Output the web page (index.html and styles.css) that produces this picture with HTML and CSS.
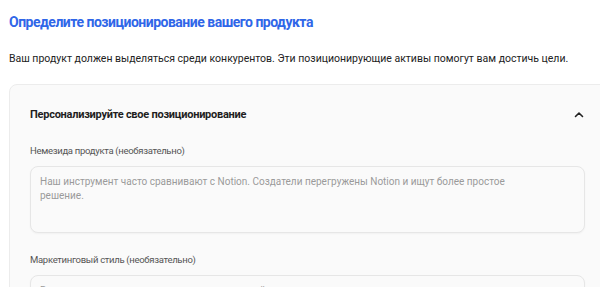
FILE: index.html
```html
<!DOCTYPE html>
<html lang="ru">
<head>
<meta charset="utf-8">
<link rel="stylesheet" href="styles.css">
</head>
<body>
<main class="page">
  <h1 class="title">Определите позиционирование вашего продукта</h1>
  <p class="intro">Ваш продукт должен выделяться среди конкурентов. Эти позиционирующие активы помогут вам достичь цели.</p>
  <section class="card">
    <div class="card-head">
      <h2 class="card-title">Персонализируйте свое позиционирование</h2>
      <svg class="chev" width="12" height="12" viewBox="0 0 12 12"><path d="M2.5 7.5 L6 4 L9.5 7.5" fill="none" stroke="#222" stroke-width="1.6" stroke-linecap="round" stroke-linejoin="round"/></svg>
    </div>
    <div class="field">
      <label class="label">Немезида продукта (необязательно)</label>
      <div class="textarea placeholder">Наш инструмент часто сравнивают с Notion. Создатели перегружены Notion и ищут более простое решение.</div>
    </div>
    <div class="field field-next">
      <label class="label">Маркетинговый стиль (необязательно)</label>
      <div class="textarea placeholder">Вдохновляет восстановить контроль над своей продуктивностью.</div>
    </div>
  </section>
</main>
</body>
</html>
```

FILE: styles.css
```css
html, body {
  margin: 0;
  padding: 0;
  background: #ffffff;
  overflow: hidden;
}
body {
  font-family: Roboto, "Noto Sans", sans-serif;
  color: #222;
}
.page {
  padding: 13px 0 0 9px;
}
.title {
  margin: 0;
  font-size: 14px;
  font-weight: 700;
  letter-spacing: -0.5px;
  color: #2f66e8;
  line-height: 18px;
}
.intro {
  margin: 21px 0 0;
  font-size: 10.5px;
  line-height: 14px;
  color: #222;
}
.card {
  margin-top: 18px;
  width: 600px;
  box-sizing: border-box;
  background: #fafafa;
  border: 1px solid #ececec;
  border-radius: 8px;
  padding: 22px 24px 20px 20px;
}
.card-head {
  display: flex;
  align-items: center;
  justify-content: space-between;
  width: 555px;
}
.card-title {
  margin: 0;
  font-size: 11px;
  font-weight: 700;
  letter-spacing: -0.25px;
  line-height: 16px;
  color: #1e1e1e;
}
.chev {
  display: block;
}
.field {
  margin-top: 21px;
  width: 555px;
}
.field-next {
  margin-top: 20px;
}
.label {
  display: block;
  font-size: 9.5px;
  letter-spacing: -0.3px;
  line-height: 14px;
  color: #555;
}
.textarea {
  margin-top: 8px;
  box-sizing: border-box;
  height: 67px;
  padding: 8px 50px 8px 9px;
  background: #fafafa;
  border: 1px solid #e6e6e6;
  border-radius: 8px;
  box-shadow: 0 1px 2px rgba(0,0,0,0.04);
  font-size: 10px;
  line-height: 14px;
}
.placeholder {
  color: #9a9a9a;
}
```
